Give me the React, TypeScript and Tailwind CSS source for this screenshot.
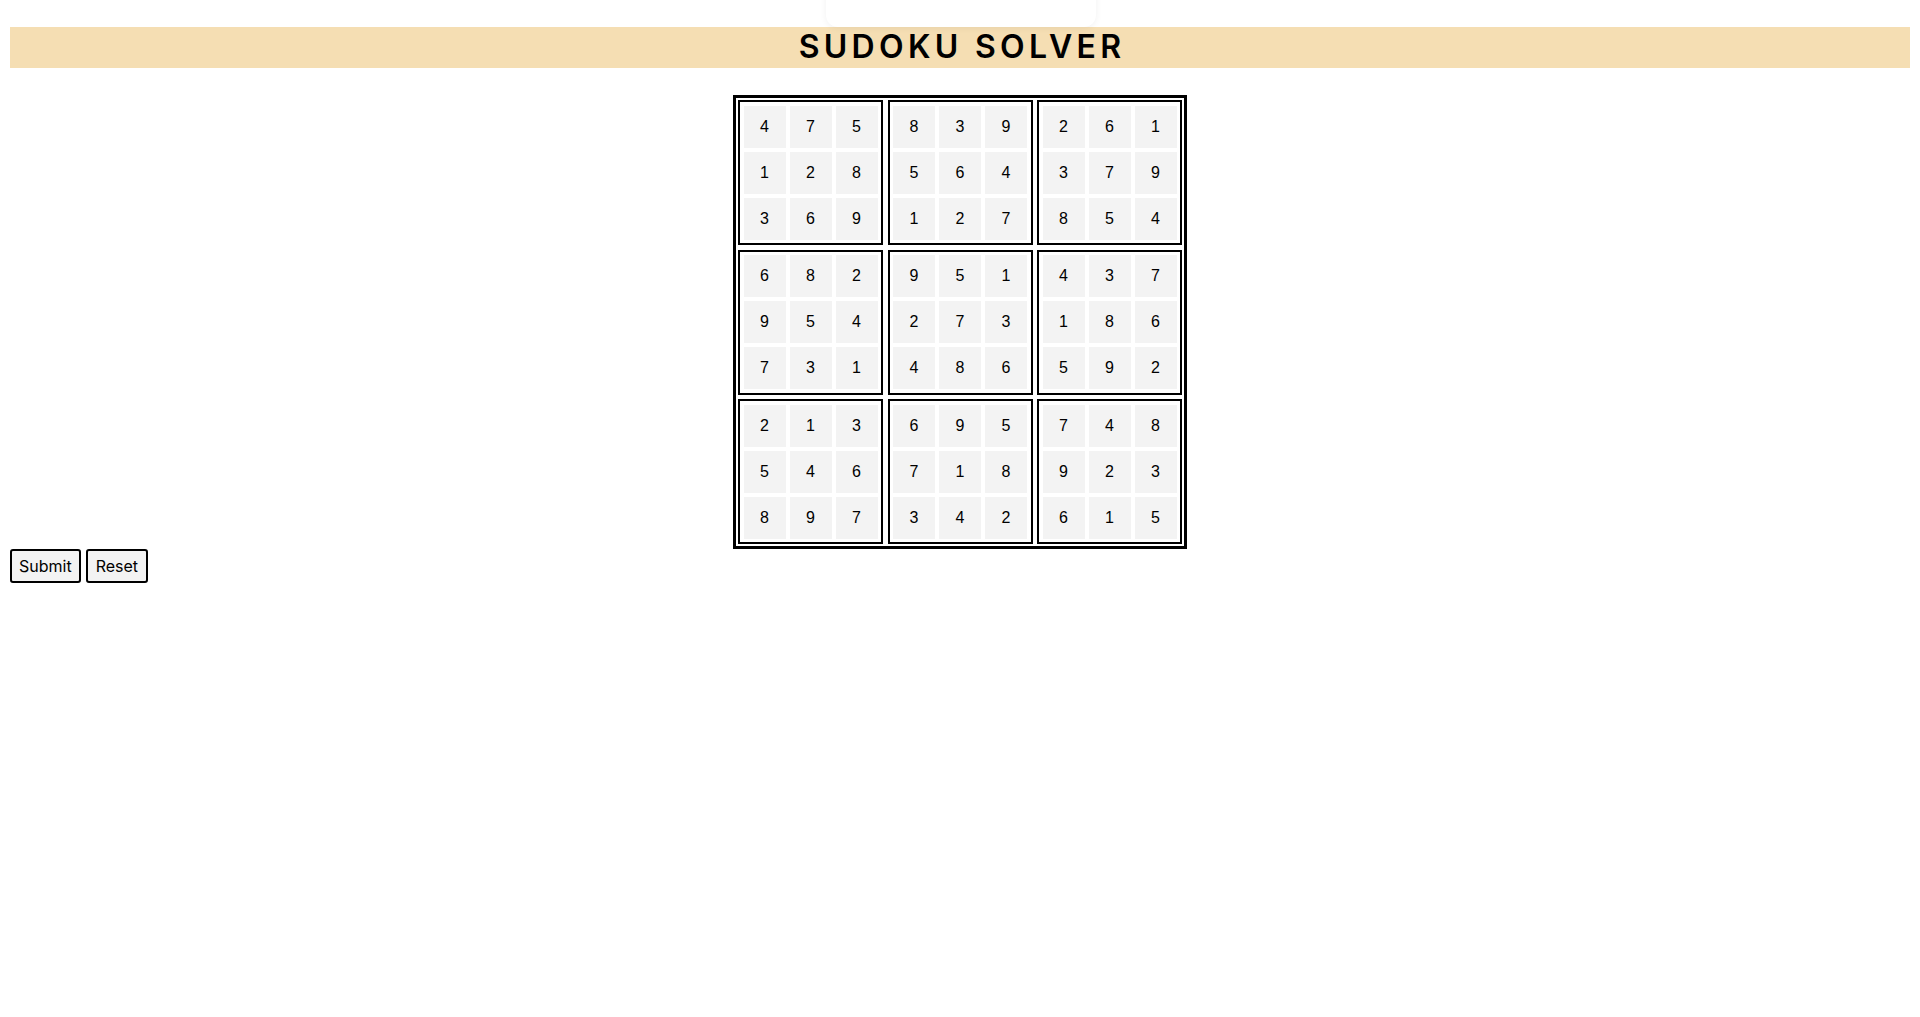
const boxes: string[] = [
  "475128369",
  "839564127",
  "261379854",
  "682954731",
  "951273486",
  "437186592",
  "213546897",
  "695718342",
  "748923615",
];

function Box({ digits }: { digits: string }) {
  return (
    <div className="grid w-[145px] h-[145px] grid-cols-3 gap-[4px] border-2 border-black p-[3.5px]">
      {digits.split("").map((d, i) => (
        <div
          key={i}
          className="flex items-center justify-center bg-[#f3f3f3] text-[16px] text-black"
          style={{ fontFamily: "'Liberation Sans', Arial, sans-serif" }}
        >
          {d}
        </div>
      ))}
    </div>
  );
}

export default function App() {
  return (
    <div className="relative min-h-[1017px] bg-white px-[10px]" style={{ fontFamily: "Inter, 'Liberation Sans', sans-serif" }}>
      {/* faint shadow of a panel sitting just above the viewport */}
      <div className="absolute left-[826px] top-[-60px] h-[60px] w-[270px] rounded-xl bg-white shadow-[0_1px_7px_rgba(0,0,0,0.06)]" />

      <h1 className="mt-[27px] flex h-[41px] items-center justify-center bg-[#f5deb3] pb-[2px] pl-[4px] text-[32px] font-semibold leading-none tracking-[4.3px] text-black">
        SUDOKU SOLVER
      </h1>

      <div className="mt-[27px] flex justify-center">
        <div className="grid grid-cols-3 gap-[4.5px] border-[3px] border-black p-[2px]">
          {boxes.map((b, i) => (
            <Box key={i} digits={b} />
          ))}
        </div>
      </div>

      <div className="flex gap-[5px]">
        <button className="h-[34px] rounded-[3px] border-2 border-black bg-[#f3f3f3] px-[7px] text-[16px] text-black">
          Submit
        </button>
        <button className="h-[34px] rounded-[3px] border-2 border-black bg-[#f3f3f3] px-[8px] text-[16px] text-black">
          Reset
        </button>
      </div>
    </div>
  );
}
